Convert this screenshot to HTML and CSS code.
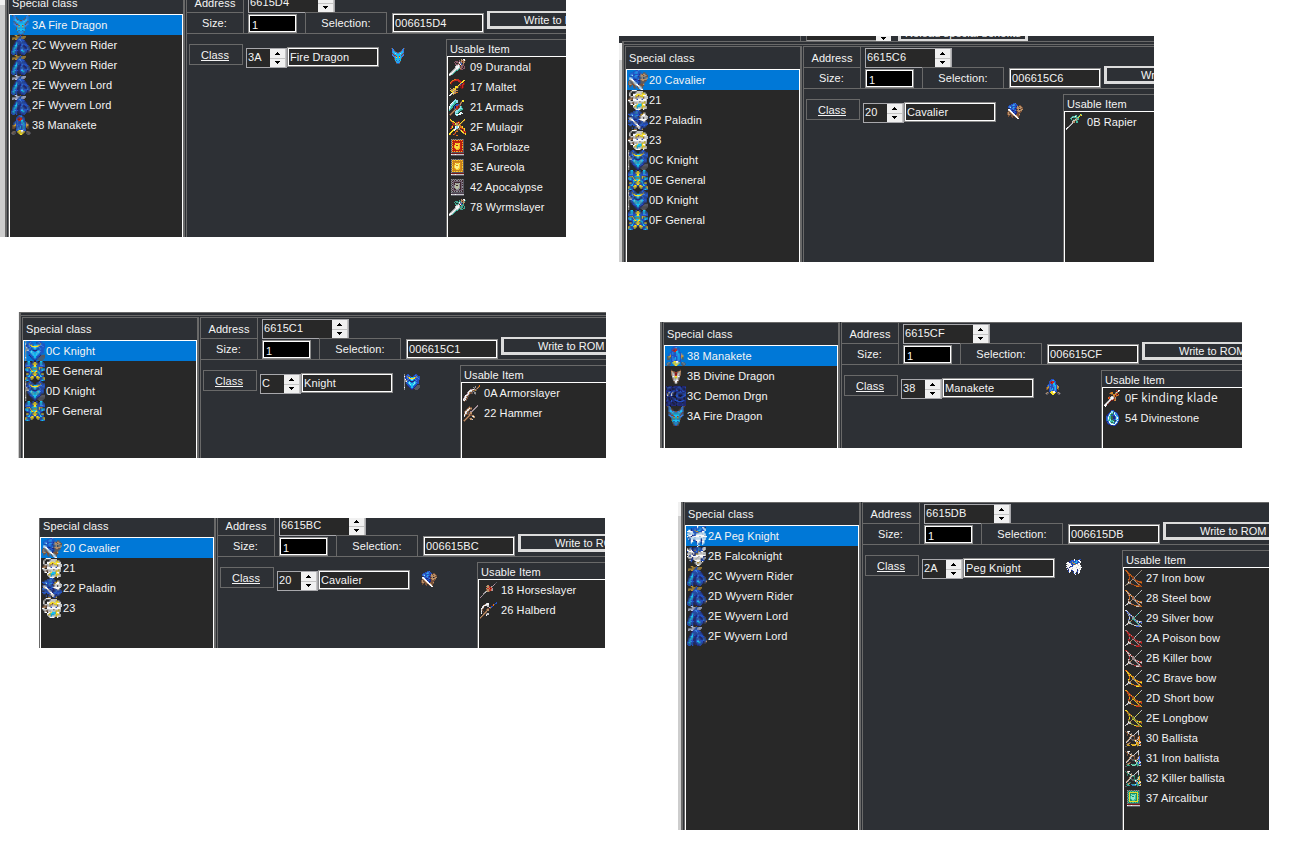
FILE: index.html
```html
<!DOCTYPE html>
<html lang="en">
<head>
<meta charset="utf-8">
<title>Special class effectiveness</title>
<link rel="stylesheet" href="styles.css">
</head>
<body>
<main class="board">
  <div class="column column-left" id="left"></div>
  <div class="column column-right" id="right"></div>
</main>
<script src="app.js"></script>
</body>
</html>
```
FILE: styles.css
```css
* { box-sizing: border-box; }
body { margin: 0; background: #fff; font: 11px/20px "Liberation Sans", Arial, sans-serif; letter-spacing: .1px; color: #f4f4f4; white-space: nowrap; }
.board { display: flex; width: 1304px; height: 868px; overflow: hidden; }
.column { display: flex; flex-direction: column; flex: none; }
.column-left { width: 619px; }
.column-right { width: 685px; }
svg { display: block; flex: none; }

/* windows: crop size, page margin */
.window { overflow: hidden; flex: none; background: linear-gradient(#f0f0f0 18px, #cdcdcd 18px); }
.w1 { width: 566px; height: 237px; background: linear-gradient(#f0f0f0 5px, #cdcdcd 5px); }
.w2 { width: 535px; height: 226px; margin-top: 36px; background: linear-gradient(#2d3035 7px, #f0f0f0 7px, #f0f0f0 24px, #cdcdcd 24px); }
.w3 { width: 588px; height: 146px; margin: 75px 0 0 18px; }
.w4 { width: 582px; height: 126px; margin: 60px 0 0 41px; }
.w5 { width: 566px; height: 130px; margin: 60px 0 0 39px; }
.w6 { width: 591px; height: 328px; margin: 54px 0 0 59px; background: linear-gradient(#f0f0f0 14px, #cdcdcd 14px); }
.w1 .frame { margin: -14px 0 0 5px; }
.w2 .frame { margin: 0 0 0 3px; }
.w3 .frame { margin: 0 0 0 1px; }
.w4 .frame { margin: -5px 0 0 0; }
.w5 .frame { margin: -9px 0 0 -3px; }
.w6 .frame { margin: -5px 0 0 3px; }

.strip { display: flex; align-items: flex-end; width: 720px; height: 5px; overflow: hidden; background: #2d3035; }
.strip-gap { width: 182px; height: 5px; border-right: 1px solid #696969; }
.strip-box { width: 70px; height: 5px; margin-left: 5px; border-left: 1px solid #696969; border-bottom: 1px solid #a0a0a0; background: #282828; }
.strip-spin { width: 15px; height: 5px; background: #f0f0f0; display: flex; justify-content: center; }
.strip-button { width: 130px; height: 22px; margin-left: 7px; border: solid #dcdcdc; border-width: 3px 3px 2px; line-height: 23px; text-align: center; }

.frame { width: 720px; border-left: 2px solid #696969; background: #2d3035; }
.rails { height: 4px; border-top: 1px solid #696969; border-bottom: 1px solid #696969; }
.rails-space { height: 1px; }
.content { display: flex; height: 370px; }
.side { width: 179px; padding-left: 1px; }
.side-box { width: 177px; height: 370px; border: solid #696969; border-width: 1px 2px 0 1px; }
.side-title { height: 22px; padding-left: 3px; line-height: 22px; }
.list { height: 347px; border: 1px solid #fff; border-bottom: 0; background: #282828; }
.row { display: flex; align-items: center; height: 20px; }
.row.selected { background: #0078d7; }
.row-icon { display: flex; justify-content: center; width: 22px; flex: none; }
.side .row-icon { padding-right: 1px; }
.items .row-icon { padding-right: 3px; }
.wide { font-family: "Open Sans", "Noto Sans", sans-serif; font-size: 12px; letter-spacing: .2px; }

.main { flex: 1; border: solid #696969; border-width: 1px 0 0 1px; }
.bar { display: flex; height: 21px; }
.bar-size { border-bottom: 1px solid #696969; }
.cell { width: 57px; text-align: center; border-right: 1px solid #696969; border-bottom: 1px solid #696969; line-height: 22px; flex: none; }
.bar-size .cell { border-bottom: 0; padding-right: 1px; line-height: 21px; }
.bar-size .cell.selection { width: 82px; margin: -1px 0 0 8px; padding: 0; border: solid #696969; border-width: 1px 1px 0; }
.spin { display: flex; border: 1px solid #a8a8ac; background: #282828; flex: none; }
.spin-text { flex: 1; padding-left: 1px; line-height: 16px; }
.spin-buttons { width: 15px; background: #c4c4c4; display: flex; flex-direction: column; gap: 1px; }
.spin-button { flex: 1; display: flex; align-items: center; justify-content: center; background: #f0f0f0; }
.address { width: 87px; height: 20px; margin: 1px 0 0 4px; }
.address .spin-buttons { width: 16px; padding-right: 1px; }
.field { border: 1px solid #8a8a8a; flex: none; background: #282828; }
.field-in { height: 100%; border: 1px solid #fff; padding-left: 1px; line-height: 16px; }
.size { width: 49px; height: 19px; margin: 1px 0 0 4px; background: #000; }
.size .field-in { padding-left: 2px; line-height: 18px; }
.picked { width: 92px; height: 20px; margin-left: 5px; }
.write { width: 150px; height: 18px; margin: -2px 0 0 3px; padding-left: 34px; border: solid #dcdcdc; border-width: 2px 3px 3px; line-height: 15px; letter-spacing: 0; background: #2d3035; flex: none; }
.editor { display: flex; height: 328px; }
.class-label { width: 54px; height: 21px; margin: 10px 0 0 2px; padding-right: 2px; border: 1px solid #696969; text-align: center; text-decoration: underline; line-height: 20px; flex: none; }
.number { width: 41px; height: 20px; margin: 14px 0 0 3px; }
.number .spin-buttons { width: 16px; padding-right: 1px; }
.name { width: 92px; height: 20px; margin-top: 13px; }
.portrait { width: 67px; padding: 14px 0 0 11px; flex: none; }
.usable { flex: 1; height: 323px; margin-top: 5px; border: solid #696969; border-width: 1px 0 0 1px; }
.usable-title { height: 16px; padding-left: 3px; line-height: 18px; }
```
FILE: app.js
```js
const palette = {
  k: '#15182c', d: '#20287c', b: '#2450c0', B: '#3c80e0', c: '#18c0f0', C: '#90e0f0',
  w: '#f8f8f8', G: '#c8c8cc', g: '#909090', s: '#585860', y: '#f8e028', Y: '#c09830',
  r: '#c82820', R: '#781818', o: '#e07818', n: '#785038', N: '#b89068', t: '#38b8a0', e: '#306848', p: '#b090a0'
};
const art = {
dragon: `
.nB..........Bn.
..BB........BB..
..BBn......nBB..
..BcBn....nBcB..
..BccBBnnBBccB..
..nBcCcBBcCcBn..
..BnBccccccBnB..
..BBnrcccccnBB..
...BBcrccrcBB...
....BcyccycB....
....ncBccBcn....
....ncccccc.....
.....cbccbc.....
.....ncBBcn.....
......BccB......
......nbbn......`,
wyvern: `
...ZZ..n........
....ZZZbBZZZ....
.ZZZZZbbZZZ.....
.Z.ZZbBBbb......
....dbbBbbb.....
...dbbbbBbbd....
...bcBbbbbbbd...
..dbcbbdbBbbb...
..bccbddbbdbbb..
.dbccbdbBbddbbs.
.bccBddbbBbddBb.
.bcbbddbBBbbbBbs
dbcBbbdbccBbbdbN
bccbbddbbccbbds.
bbcbb.ddbbbb....
.bb.b...ddb.....`,
manakete: `
......bbb.......
.....bbBcb......
....bbrrrbb.....
....brRrrBb.....
....bbrrccb.....
...bbBbbccbb....
..bBbBbbBccbN...
..bYbbbbBBcbNN..
.nYYbBbbbBcbYY..
.nYnbBbcbBcbYn..
.nn.bBBcbBcb.n..
....bBBbbBBb....
....bbyywwbb....
.sNs.yyywwy.sNs.
sNss..yyyy..ssNs
.ss....yy....ss.`,
cavalier: `
......bbB.......
....bbBBbb......
..bbbBcBbbb.nn..
.bBBbbbbbdNnNNn.
.bBCbbcBbbNNnNNn
..dbbBBbdnNNNNnn
.wwBbbBbbdnNknNN
.GwwbddbBnNNNNN.
.nNwwbbbddnNNnn.
nNnNwwdbbdnnnn..
nNnnNwwbddnnn...
nNNnnNwwdnnnN...
.nn.nnNwwNnnn...
.n..nn.nwwNn....
.....n..nwwn....
..........ww....`,
paladin: `
......bbB.......
....bbBBbb......
..bbbBcBbbb.YG..
bbBBbbbbbdYYww..
.bbCbbcBbbYwwwG.
..dbbBBbdYwwwwww
bwwBbbBbbdwwkwwG
.GwwbddbBwwwwww.
bBGwwbbbddGwww..
bBbbwwdbbdbbGGb.
..bbbwwbddbBbbbb
bbBbbbwwdbBbbbbb
.bb.bbbwwbbbbBb.
......Nwwwbdbb..
...b.bb.wwdb....
.....YN..bbY....`,
unit: `
...wwww.........
..w....wwwww....
.w....wwwwwyyw..
.w..wwwyyywyyyw.
.w..wwyynyyywww.
..wwGwyNNwyyywww
.nNnGwNwwwwwnwww
nNNnwwwbwwwbwww.
ww..wwwwwwwwwww.
.wwwGwwwwNwwwyw.
..wnnwGwwwwyyyw.
..ww.wwycccyww..
....wwyccccyyw..
....wyycccwyyyw.
.....wwcwwwywww.
......wwww..w...`,
knight: `
g..bb......bb...
g.bbBb...dbBbb..
wbbYbbb..bbbYbbb
gdbBYybcccyYBBbb
gbbBbyyyyyybbbBb
gwdbBbcCCcbBbbbb
gggBbdbccbdbBbb.
ggwbbcddddcBbbb.
g.bBcCcbbcCcBbb.
g.bbcCccccCcbbb.
g..bbcCccCcbb...
g..dbbccccbbdsss
g...dbbccbbdssss
w....dbccbdsssss
g.....dbbdsssss.
g......dd..sss..`,
general: `
..cc..b..b..cc..
.bccb.byyb.bccb.
bbccbbyyyybbccbb
bBBBbbbyybbbBBBb
bbbbbbcyycbbbbbb
.YYybcccccbyYY..
cccbybcYYcbybccc
bccbbycccybbbccb
.bbbcyycyycbbb..
..dbccbyybccbd..
.yybcbyyyybcbyy.
.bbcbbbyybbbcbb.
.bccbyybbyybccb.
YYbbyyy..yyybbYY
ycbbby....ybbbcy
bccb........bccb`,
pegasus: `
........w....bb.
.....bbbwbBbwwk.
...dbbBbbbcBbww.
.wwdbbYbBccbbbw.
wwwwGbbYYbbbww..
.GwwwbbbbYwGww..
wwGwwwdGwwwwGww.
.wwwdbbwwwwwwwG.
wGwdGwwwwwGwwwww
.dGwwwGwwwwwwGw.
.wdwwGwwwwwdwww.
..dwwdbwwwwdGw..
..bww..dwwGbww..
...w...bww.dww..
........wb..w...
.........w......`,
falcon: `
........w....k..
..bb.ddbbBb.bww.
w.wbdbBbbcBbwww.
wwGwdbYbbBbbbw..
bwwwwdbBbYbww...
.wGwwwbbbwwGwww.
wwwGdwdYYwwwwGw.
.wbwwdbwwwwwwww.
wGbGwwwwwGwwwd..
.wwwdwwwGwwwwbw.
...dbwwGwwwdbw..
..wbd.wwwwwbbb..
...b...GwwG.w...
......GwYYwG....
.......wGww.....
........ww......`,
divine: `
................
................
................
....n......n....
....NNn..nNN....
....NwNrrNwN....
....NwwRRwwN....
....nGwrrwGn....
.....wwyyww.....
.....Gwyywg.....
.....nwGwwn.....
......wGww......
......nwwn......
.......ww.......
................
................`,
demon: `
dkdddkddddbdkddd
dbBbddbddbbbdddb
kbdddkkdbddbbdkd
dddkddbdbbkddbdd
ddbbdbbddddbdbbd
dkwbbGdkdbbbbddb
bNbdwdkkbbdddbbb
dwkbGbkdbbkkkdbb
kbdddkkkbbdkdbbd
ddkddbdkdbbbbbkd
kbkdkdbbkdddddkd
dbdkbddbbbkkdbbd
ddddbddkdbbbbbdd
kdbddkddkddddkdd
ddbdddkddbdddbdd
dddkddddkddddddd`,
sword: `
...........N.ww.
.........T.NNNwn
......TT.TnNRNn.
.....T.TTwbNnNN.
......T.nGNb.N..
......TTGRwbnT..
.......GwG.NTT..
......GwwGnTT.T.
.....gGwGtNT.TT.
....gGwGt.nTT...
...gGwGt........
..gGwGt.........
.gGwGt..........
gwwGt...........
wwGt............
Gg..............`,
maltet: `
.....oorr.......
...oorrrrrR..yy.
..orRR..rrrRyyk.
.orR.....RryyRR.
.oR.......yb.rR.
..R......ybRrrR.
........ynrRrR..
......yyn.RRrR..
.N..yNyn...RR...
..NNNyy.........
.yNNyNNN........
..yyNNN.........
...yGNNo........
..wGyNo.........
.wG.N...........
wG..............`,
armads: `
......C.........
.....CCC....yy..
....CCtC...nyy..
...wCttC..nNk...
..wCCtt...Nn....
.wCCttkbbnN.....
.CCtt.bbrnn.....
wCtt.bkrRnCt....
wtt..bnrnCCCt...
Ct...nNnCCttt...
t...nNnCCtte....
...nNnCCtt......
..nNn.CCtkww....
.nNn..Ct.wwCw...
nNn...Cwwww.....
.n.....C........`,
mulagir: `
.y............y.
.oy..........yo.
..oyy...RR..yn..
...noy.ryr.yn...
...rrRyNnryn....
....rnyNnyn.....
...rRRnNyNo.....
..ry..wCwnooy...
.ro..bwCnNRrooy.
....ywwnnNnR.ry.
...yyw.n..NyRry.
..yy..no...yyrrr
.yy...o.....yyRr
yy...nr......Noy
yo..or.........y
.......o........`,
tome: `
..gsgsgsgsgsgs..
..sHAHAHAHAHAs..
..gAZZZZZZZZAs..
..sHZAAAAAAZHs..
..gAZAYHHYAZAs..
..sHZAHYYHAZHs..
..gAZHYAYHAZAs..
..sHZHYYYHAZHs..
..gAZAHYHHAZAs..
..sHZAAHHAAZHs..
..gAZZZZZZZZAs..
..sHAHAHAHAHAs..
..gsssssssssss..
..RRRRRRRRRRRR..
..wGGGwGGGGGGG..
..ssssssssssss..`,
rapier: `
.............yt.
........tT..tYy.
......tTwt.ty...
.....tGtttTy....
....tT..eNtt....
.....t.eGNTt....
......eGNTe.....
......GN.tt.....
.....gG.........
....gG..........
...gG...........
..gG............
.wG.............
wG..............
G...............
................`,
slayer: `
...............o
...........g..no
.........gsg.nN.
..........gknN..
.......pGwNgn...
......GwNnnYs...
.....GwGngs.....
....pwNns.gg....
...pwGn....s....
..wwGn..........
.pwNns..........
.GwGn...........
pwGnn...........
wGwn............
Gwns............
.n..............`,
hammer: `
.............p..
......n.....pg..
.....nNn...pg...
....nNwN..pg....
...nGwNn.pg.....
..nNwGn.pg......
.nGwNn.pg.......
.nwGnsnN........
.GNnnnNn........
.wn..nNnNN......
.G..nNn.GwN.....
...nNn...NN.....
..nNn.nN........
.nNn...NG.......
nNn.............
.n..............`,
blade: `
...........r.ww.
...........RNwn.
......no..nCN...
.....noY..Nor...
.......nooNr.o..
........NYRoon..
.....n.GNoRn....
....orGwGnN.....
.....GwGrno.....
....gwGR.oN.....
...gwGR.........
..gwGR..........
.gwGn...........
gwwR............
wwG.............
.w..............`,
stone: `
.......bb.......
......dCBd......
.....dBCeCBd....
....dBwtbwBBd...
...dbCtebCcBb...
..ddBwtbbbwBBd..
..bbCtteddBCcb..
..bBwtteddbCwB..
..bBCtCebbBCcB..
..bBttCteedBwB..
..ddBwttCebCBd..
...bbwCetbCwB...
...dbBwCtbwBd...
....ddBwwwBd....
......ddbbd.....
................`,
lance: `
...............s
..............s.
.............p..
.......N....p...
......NNr.pg....
.......NrrN.....
......NrNRrp....
......nNrrNp....
.....gGNn.......
....gG..........
...pg...........
...g............
..g.............
.p..............
p...............
................`,
halberd: `
...............b
......Gw......bb
....nGww....ob..
...GwwGG...Ro...
..Gwn..G..bb....
..wG....Gob.....
.wGn...nRs......
.Gn...nN........
.w.n.nN.........
.G..nNn.........
.w.nNnsG........
...Nn.GG........
..Nn..w.........
.Nn.............
Nn..............
n...............`,
bow: `
ZZ.............G
.HZ...........G.
..HA.........g..
..AHA.......G...
...AZH.....g....
...AHAZ...g.....
....A.HA.G......
....Z..Ag.......
...HA..gAA......
...A..N.gHAA....
...GAN...gAZHZZA
...wGg....gA.ZHH
..GNGGA....gA..A
.GG...AA....gH..
G.......ZZAAAAZ.
..........HHHAAZ`,
ballista: `
............G...
n.Gww......GG...
.nNG......GsG...
..nGn.g..Gs.G...
..n.nwN.G...G...
..n..nNGn...n...
.....NGnn...nZ..
....NGs.n..nGZ..
...NG.nsnnnGZZ..
..NG...sAwN.AA..
.NGs.....GNG.GZ.
.G..nn....HAZGw.
..nNN.....HAZGs.
.nAN..HAAGAAA.Z.
..AAA..HHA.AAGG.
ss.........s....`
};
// name -> [grid, overrides of palette letters]
const skins = {
  rider: ['wyvern', { Z: '#b89038' }], lord: ['wyvern', { Z: '#b8c0e0' }],
  durandal: ['sword', { T: '#8c5868' }], wyrm: ['sword', { T: '#40a890', n: '#309080' }],
  forblaze: ['tome', { A: '#c82010', H: '#f8b020', Z: '#b02010', Y: '#f8e040' }],
  aureola: ['tome', { A: '#d88818', H: '#f8d030', Z: '#c08020', Y: '#f8f090' }],
  apocalypse: ['tome', { A: '#402830', H: '#909098', Z: '#706070', Y: '#b8c0a0', R: '#504050' }],
  aircalibur: ['tome', { A: '#189068', H: '#40c0a0', Z: '#e8d828', Y: '#90e8c8' }],
  rapier: ['rapier', { T: '#80b8a0' }],
  iron: ['bow', { A: '#904018', H: '#d07018', Z: '#b85018', G: '#988878' }],
  steel: ['bow', { A: '#a86848', H: '#c8c0b0', Z: '#d07018' }],
  silver: ['bow', { A: '#909898', H: '#4060e0', Z: '#d8d8d8', g: '#38b0a0' }],
  poison: ['bow', { A: '#902828', H: '#c82020', Z: '#a08080' }],
  killer: ['bow', { A: '#a08080', H: '#e0d0d0', Z: '#b83030' }],
  brave: ['bow', { A: '#c88818', H: '#f8e028', Z: '#e06018' }],
  short: ['bow', { A: '#a85818', H: '#d03018', Z: '#e0a020', g: '#c8b828' }],
  long: ['bow', { A: '#808030', H: '#d06818', Z: '#e8d828', g: '#b8c048' }],
  ball1: ['ballista', { Z: '#e07818', A: '#c8a028', H: '#f8c020' }],
  ball2: ['ballista', { Z: '#3060e0', A: '#38a888', H: '#80d8b8' }],
  ball3: ['ballista', { Z: '#e0b028', A: '#30a898', H: '#2870d0', n: '#308068' }]
};
function sprite(name, size) {
  const [grid, extra] = skins[name] || [name, {}];
  const colors = { ...palette, ...extra };
  let cells = '';
  art[grid].trim().split('\n').forEach((line, y) => {
    for (let x = 0; x < line.length;) {
      let n = 1;
      while (line[x + n] === line[x]) n++;
      if (colors[line[x]]) cells += `<rect x="${x}" y="${y}" width="${n}" height="1" fill="${colors[line[x]]}"/>`;
      x += n;
    }
  });
  const edges = size < 20 ? 'crispEdges' : 'geometricPrecision';
  return `<svg width="${size}" height="${size}" viewBox="0 0 16 16" shape-rendering="${edges}">${cells}</svg>`;
}
const arrow = up => `<div class="spin-button"><svg width="5" height="3" viewBox="0 0 5 3" shape-rendering="crispEdges"><path fill="#000" d="${up ? 'M2 0h1v1h1v1h1v1H0V2h1V1h1z' : 'M0 0h5v1H4v1H3v1H2V2H1V1H0z'}"/></svg></div>`;
const spin = (cls, text) => `<div class="spin ${cls}"><div class="spin-text">${text}</div><div class="spin-buttons">${arrow(true)}${arrow(false)}</div></div>`;
const rows = (list, size, sel) => list.map(([icon, text], i) => `<div class="row${sel && !i ? ' selected' : ''}"><div class="row-icon">${sprite(icon, size)}</div><span>${text}</span></div>`).join('');

function windowHtml(w) {
  return `<section class="window w${w.id}">
  ${w.strip ? `<div class="strip"><div class="strip-gap"></div><div class="strip-box"></div><div class="strip-spin">${arrow(false)}</div><div class="strip-button">Reload special benefits</div></div>` : ''}
  <div class="frame"><div class="rails"></div><div class="rails-space"></div>
  <div class="content">
    <div class="side"><div class="side-box"><div class="side-title">Special class</div><div class="list">${rows(w.classes, 20, true)}</div></div></div>
    <div class="main">
      <div class="bar"><div class="cell">Address</div>${spin('address', w.addr)}</div>
      <div class="bar bar-size"><div class="cell">Size:</div><div class="field size"><div class="field-in">1</div></div><div class="cell selection">Selection:</div><div class="field picked"><div class="field-in">00${w.addr}</div></div><div class="write">Write to ROM</div></div>
      <div class="editor"><div class="class-label">Class</div>${spin('number', w.num)}<div class="field name"><div class="field-in">${w.name}</div></div><div class="portrait">${sprite(w.classes[0][0], 16)}</div>
        <div class="usable"><div class="usable-title">Usable Item</div><div class="list items">${rows(w.items, 17)}</div></div></div>
    </div>
  </div></div></section>`;
}
const wyverns = [['rider', '2C Wyvern Rider'], ['rider', '2D Wyvern Rider'], ['lord', '2E Wyvern Lord'], ['lord', '2F Wyvern Lord']];
const horses = [['cavalier', '20 Cavalier'], ['unit', '21'], ['paladin', '22 Paladin'], ['unit', '23']];
const armors = [['knight', '0C Knight'], ['general', '0E General'], ['knight', '0D Knight'], ['general', '0F General']];
const left = [
  { id: 1, addr: '6615D4', num: '3A', name: 'Fire Dragon', classes: [['dragon', '3A Fire Dragon'], ...wyverns, ['manakete', '38 Manakete']],
    items: [['durandal', '09 Durandal'], ['maltet', '17 Maltet'], ['armads', '21 Armads'], ['mulagir', '2F Mulagir'], ['forblaze', '3A Forblaze'], ['aureola', '3E Aureola'], ['apocalypse', '42 Apocalypse'], ['wyrm', '78 Wyrmslayer']] },
  { id: 3, addr: '6615C1', num: 'C', name: 'Knight', classes: armors, items: [['slayer', '0A Armorslayer'], ['hammer', '22 Hammer']] },
  { id: 5, addr: '6615BC', num: '20', name: 'Cavalier', classes: horses, items: [['lance', '18 Horseslayer'], ['halberd', '26 Halberd']] }
];
const right = [
  { id: 2, strip: true, addr: '6615C6', num: '20', name: 'Cavalier', classes: [...horses, ...armors], items: [['rapier', '0B Rapier']] },
  { id: 4, addr: '6615CF', num: '38', name: 'Manakete', classes: [['manakete', '38 Manakete'], ['divine', '3B Divine Dragon'], ['demon', '3C Demon Drgn'], ['dragon', '3A Fire Dragon']],
    items: [['blade', '0F <span class="wide">kinding klade</span>'], ['stone', '54 Divinestone']] },
  { id: 6, addr: '6615DB', num: '2A', name: 'Peg Knight', classes: [['pegasus', '2A Peg Knight'], ['falcon', '2B Falcoknight'], ...wyverns],
    items: [['iron', '27 Iron bow'], ['steel', '28 Steel bow'], ['silver', '29 Silver bow'], ['poison', '2A Poison bow'], ['killer', '2B Killer bow'], ['brave', '2C Brave bow'], ['short', '2D Short bow'], ['long', '2E Longbow'], ['ball1', '30 Ballista'], ['ball2', '31 Iron ballista'], ['ball3', '32 Killer ballista'], ['aircalibur', '37 Aircalibur']] }
];
document.getElementById('left').innerHTML = left.map(windowHtml).join('');
document.getElementById('right').innerHTML = right.map(windowHtml).join('');
```
